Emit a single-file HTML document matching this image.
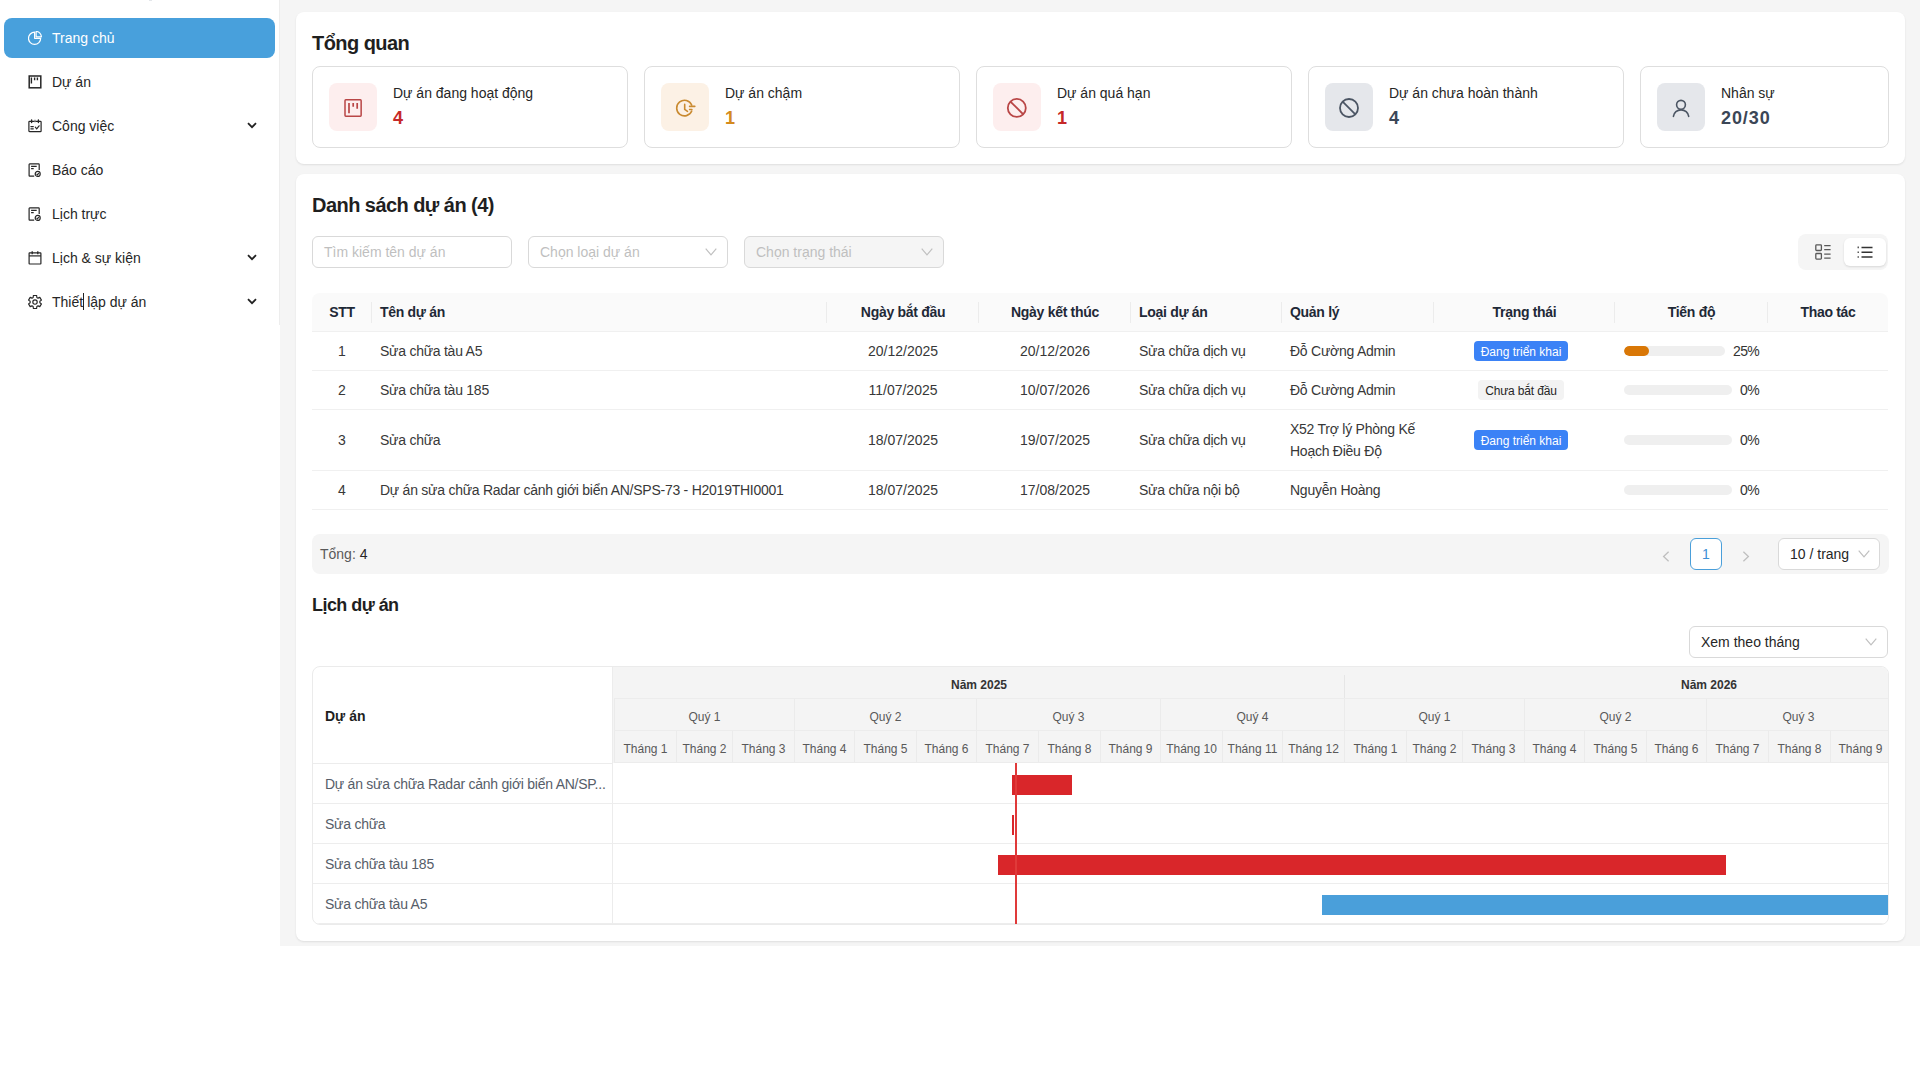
<!DOCTYPE html>
<html lang="vi">
<head>
<meta charset="utf-8">
<title>Trang chủ</title>
<style>
*{box-sizing:border-box;margin:0;padding:0}
html,body{width:1920px;height:1080px;overflow:hidden;background:#fff}
body{font-family:"Liberation Sans",sans-serif;font-size:14px;line-height:22px;color:#262626;position:relative}
.abs{position:absolute}
svg{display:block}
/* sidebar */
#side{left:0;top:0;width:280px;height:1080px;background:#fff}
#sbd{left:279px;top:0;width:1px;height:325px;background:#ededed}
.nav{position:absolute;left:4px;width:271px;height:40px;border-radius:8px;color:#262626}
.nav .ic{position:absolute;left:24px;top:13px;width:14px;height:14px}
.nav .tx{position:absolute;left:48px;top:9px;white-space:nowrap}
.nav.active{background:#48a0dc;color:#fff}
.nav .chev{position:absolute;left:243px;top:16px}
.caret{display:inline-block;width:1px;height:17px;background:#222;vertical-align:-3px;margin:0 3px 0 0}
/* main */
#main{left:280px;top:0;width:1640px;height:946px;background:#f5f5f5}
.card{position:absolute;background:#fff;border-radius:8px;box-shadow:0 1px 2px rgba(0,0,0,.06),0 1px 3px rgba(0,0,0,.04)}
.h1{font-size:20px;letter-spacing:-0.55px;font-weight:700;line-height:28px;color:#1f1f1f;white-space:nowrap}
.stat{position:absolute;top:54px;height:82px;border:1px solid #dedede;border-radius:8px;background:#fff}
.ibox{position:absolute;left:16px;top:16px;width:48px;height:48px;border-radius:8px;display:flex;align-items:center;justify-content:center}
.lbl{position:absolute;left:80px;top:15px;white-space:nowrap;color:#262626}
.val{position:absolute;left:80px;top:39px;font-size:18px;font-weight:700;line-height:24px;white-space:nowrap}
.h2{font-size:18px;letter-spacing:-0.55px;font-weight:700;line-height:24px;color:#1f1f1f;white-space:nowrap}
.inp{position:absolute;height:32px;border:1px solid #d9d9d9;border-radius:6px;background:#fff;padding:4px 11px;white-space:nowrap}
.inp.dis{background:#f5f5f5}
.ph{color:#bfbfbf}
.sel-ch{position:absolute;right:10px;top:11px}
.seg{position:absolute;width:90px;height:36px;background:#f5f5f5;border-radius:8px}
.segi{position:absolute;top:4px;width:42px;height:28px;border-radius:6px;display:flex;align-items:center;justify-content:center}
.segi:first-child{padding-left:4px}
.segi.on{background:#fff;box-shadow:0 1px 2px rgba(0,0,0,.08),0 1px 3px rgba(0,0,0,.05)}
.tbl{position:absolute;border-collapse:separate;border-spacing:0;table-layout:fixed;width:1576px}
.tbl th{background:#fafafa;font-weight:700;letter-spacing:-0.3px;color:#1f2937;text-align:left;padding:8px;height:39px;border-bottom:1px solid #f0f0f0;position:relative;white-space:nowrap}
.tbl th:first-child{border-top-left-radius:8px}
.tbl th:last-child{border-top-right-radius:8px}
.tbl th.c,.tbl td.c{text-align:center}
.tbl .sep{position:absolute;right:0;top:9px;width:1px;height:21px;background:#ececec}
.tbl td.t{letter-spacing:-0.25px}
.tbl td{padding:8px;border-bottom:1px solid #f0f0f0;color:#383838;vertical-align:middle;white-space:nowrap}
.tag{display:inline-block;font-size:12px;line-height:22px;height:20px;padding:0 7px;border-radius:4px;vertical-align:top;position:relative;top:1px;margin-right:7px}
.tag.on{background:#3b82f6;color:#fff}
.tag.off{background:#f3f3f3;color:#262626;letter-spacing:-0.15px}
.prog{display:flex;align-items:center;width:136px;margin-left:1px}
.trk{flex:none;height:10px;background:#efefef;border-radius:5px;overflow:hidden}
.fill{height:10px;background:#d97706;border-radius:5px}
.ptx{margin-left:8px;color:#333;white-space:nowrap;letter-spacing:-0.6px}
.pbar{position:absolute;height:40px;background:#f5f5f5;border-radius:8px}
.ptot{position:absolute;left:8px;top:9px;color:#595959}
.pg1{position:absolute;left:1378px;top:4px;width:32px;height:32px;border:1px solid #4a9fda;border-radius:6px;background:#fff;color:#3d8fd6;text-align:center;line-height:30px}
.gantt{position:absolute;border:1px solid #ebebeb;border-radius:8px;overflow:hidden;background:#fff}
.ghbg{position:absolute;left:300px;top:0;right:0;height:96px;background:#f4f4f4}
.gleft-h{position:absolute;left:0;top:0;width:300px;height:97px;border-right:1px solid #ececec;border-bottom:1px solid #ececec;padding:38px 12px;font-weight:700;color:#1f1f1f}
.gclip{position:absolute;left:0;top:0;width:1575px;height:257px;overflow:hidden;z-index:1}
.gc{position:absolute;height:32px;text-align:center;font-size:12px;line-height:32px;padding-top:2px;color:#595959;white-space:nowrap;border-bottom:1px solid #ececec}
.gc.yr{font-weight:700;color:#333}
.gc.qt,.gc.mo{border-left:1px solid #ebebeb}
.bar{position:absolute;height:20px}
.today{position:absolute;top:96px;width:2px;height:161px;background:#e03a3a}
.grow{position:absolute;left:0;width:1575px;height:40px;border-bottom:1px solid #ededed}
.glbl{position:absolute;left:12px;top:9px;color:#565d69;white-space:nowrap;letter-spacing:-0.25px}
.gvl{position:absolute;left:299px;top:0;width:1px;height:257px;background:#ececec}
</style>
</head>
<body>
<div id="side" class="abs">
  <div class="nav active" style="top:18px">
    <svg class="ic" viewBox="0 0 14 14" fill="none" stroke="#fff" stroke-width="1.2" stroke-linejoin="round"><path d="M6.6 1.2A6.1 6.1 0 1 0 12.7 7.3H6.6z"/><path d="M8.1 .5v5.3h5.3A5.3 5.3 0 0 0 8.1 .5z"/></svg>
    <span class="tx">Trang chủ</span>
  </div>
  <div class="nav" style="top:62px">
    <svg class="ic" viewBox="0 0 14 14" fill="none" stroke="#262626" stroke-width="1.5"><rect x="1.2" y="1" width="11.6" height="11.8"/><path d="M3.4 2.4v6.2M6.6 2.4v2.8M9.4 2.4v2.8" stroke-width="1.4"/></svg>
    <span class="tx">Dự án</span>
  </div>
  <div class="nav" style="top:106px">
    <svg class="ic" viewBox="0 0 14 14" fill="none" stroke="#262626" stroke-width="1.2" stroke-linecap="round"><rect x=".9" y="2.4" width="12.2" height="10.2" rx=".7"/><path d="M3.6 1v2.6M10.4 1v2.6" stroke-width="1.4"/><path d="M7 1.2v1.6" stroke="#888"/><path d="M2.9 7.6h2.4M2.9 9.8h2.4"/><path d="M7.3 8.2l1.4 1.6 2.4-3"/></svg>
    <span class="tx">Công việc</span>
    <svg class="chev" width="10" height="7" viewBox="0 0 10 7"><path d="M1 1.2l4 4 4-4" fill="none" stroke="#222" stroke-width="1.8"/></svg>
  </div>
  <div class="nav" style="top:150px">
    <svg class="ic" viewBox="0 0 14 14" fill="none" stroke="#262626" stroke-width="1.2"><path d="M6.2 13.1H1.7a.6.6 0 0 1-.6-.6V1.5a.6.6 0 0 1 .6-.6h8.9a.6.6 0 0 1 .6.6v5.6"/><path d="M3.1 3.4h5.6M3.1 5.6h2.6"/><circle cx="9.7" cy="10.9" r="2.5"/><path d="M8.6 10.9l.8.9 1.4-1.6" stroke-width="1.1"/></svg>
    <span class="tx">Báo cáo</span>
  </div>
  <div class="nav" style="top:194px">
    <svg class="ic" viewBox="0 0 14 14" fill="none" stroke="#262626" stroke-width="1.2"><path d="M6.2 13.1H1.7a.6.6 0 0 1-.6-.6V1.5a.6.6 0 0 1 .6-.6h8.9a.6.6 0 0 1 .6.6v5.6"/><path d="M3.1 3.4h5.6M3.1 5.6h2.6"/><circle cx="9.7" cy="10.9" r="2.5"/><path d="M8.6 10.9l.8.9 1.4-1.6" stroke-width="1.1"/></svg>
    <span class="tx">Lịch trực</span>
  </div>
  <div class="nav" style="top:238px">
    <svg class="ic" viewBox="0 0 14 14" fill="none" stroke="#262626" stroke-width="1.2"><rect x="1.1" y="1.9" width="11.8" height="11.1" rx=".5"/><path d="M1.1 4.9h11.8"/><path d="M4.2 .3v3M9.8 .3v3" stroke-width="1.3"/></svg>
    <span class="tx">Lịch &amp; sự kiện</span>
    <svg class="chev" width="10" height="7" viewBox="0 0 10 7"><path d="M1 1.2l4 4 4-4" fill="none" stroke="#222" stroke-width="1.8"/></svg>
  </div>
  <div class="nav" style="top:282px">
    <svg class="ic" viewBox="0 0 14 14" fill="none" stroke="#262626" stroke-width="1.15" stroke-linejoin="round"><path d="M5.16 2.46 L5.38 0.50 L8.62 0.50 L8.84 2.46 L10.02 3.14 L11.82 2.35 L13.44 5.15 L11.85 6.32 L11.85 7.68 L13.44 8.85 L11.82 11.65 L10.02 10.86 L8.84 11.54 L8.62 13.50 L5.38 13.50 L5.16 11.54 L3.98 10.86 L2.18 11.65 L0.56 8.85 L2.15 7.68 L2.15 6.32 L0.56 5.15 L2.18 2.35 L3.98 3.14 Z"/><circle cx="7" cy="7" r="2.2"/></svg>
    <span class="tx">Thiết<i class="caret"></i>lập dự án</span>
    <svg class="chev" width="10" height="7" viewBox="0 0 10 7"><path d="M1 1.2l4 4 4-4" fill="none" stroke="#222" stroke-width="1.8"/></svg>
  </div>
</div>

<div id="main" class="abs"></div>
<div id="sbd" class="abs"></div>
<div class="abs" style="left:149px;top:0;width:3px;height:1px;background:#e4e7eb"></div>

<!-- CARD 1 -->
<div class="card" style="left:296px;top:12px;width:1609px;height:152px">
  <div class="abs h1" style="left:16px;top:17px">Tổng quan</div>
  <div class="stat" style="left:16px;width:316px">
    <div class="ibox" style="background:#fdeeee"><svg width="48" height="48" viewBox="0 0 48 48" fill="none" stroke="#b94646" stroke-width="1.5"><rect x="16" y="16.85" width="16.15" height="16.3" rx=".8"/><path d="M20 20v10.2M24.2 20v3.8M28.2 20v5.7" stroke-width="1.7"/></svg></div>
    <div class="lbl">Dự án đang hoạt động</div>
    <div class="val" style="color:#c62828">4</div>
  </div>
  <div class="stat" style="left:348px;width:316px">
    <div class="ibox" style="background:#fcf1e5"><svg width="48" height="48" viewBox="0 0 48 48" fill="none" stroke="#c98a30" stroke-width="1.6" stroke-linecap="round"><path d="M30.68 22.05A7.8 7.8 0 1 0 30.73 28.02"/><path d="M23.7 21.4v4.9l2.8 2"/><path d="M28.6 23.4h5.2M28.6 26.5h2.3"/></svg></div>
    <div class="lbl">Dự án chậm</div>
    <div class="val" style="color:#d48a1e">1</div>
  </div>
  <div class="stat" style="left:680px;width:316px">
    <div class="ibox" style="background:#fdeeee"><svg width="48" height="48" viewBox="0 0 48 48" fill="none" stroke="#b94646" stroke-width="1.8"><circle cx="23.8" cy="24.9" r="9"/><path d="M17.44 18.54l12.72 12.72"/></svg></div>
    <div class="lbl">Dự án quá hạn</div>
    <div class="val" style="color:#c62828">1</div>
  </div>
  <div class="stat" style="left:1012px;width:316px">
    <div class="ibox" style="background:#e5e7eb"><svg width="48" height="48" viewBox="0 0 48 48" fill="none" stroke="#4b5563" stroke-width="1.8"><circle cx="24" cy="25" r="9"/><path d="M17.64 18.64l12.72 12.72"/></svg></div>
    <div class="lbl">Dự án chưa hoàn thành</div>
    <div class="val" style="color:#3b4656">4</div>
  </div>
  <div class="stat" style="left:1344px;width:249px">
    <div class="ibox" style="background:#e5e7eb"><svg width="48" height="48" viewBox="0 0 48 48" fill="none" stroke="#4b5563" stroke-width="1.6" stroke-linecap="round"><circle cx="24" cy="21.8" r="4.4"/><path d="M16.4 33.4A7.7 7.4 0 0 1 31.7 33.4"/></svg></div>
    <div class="lbl">Nhân sự</div>
    <div class="val" style="color:#3b4656;letter-spacing:0.9px">20/30</div>
  </div>
</div>

<!-- CARD 2 -->
<div class="card" style="left:296px;top:174px;width:1609px;height:767px">
  <div class="abs h1" style="left:16px;top:17px">Danh sách dự án (4)</div>
  <div class="inp" style="left:16px;top:62px;width:200px"><span class="ph">Tìm kiếm tên dự án</span></div>
  <div class="inp" style="left:232px;top:62px;width:200px"><span class="ph">Chọn loại dự án</span><svg class="sel-ch" width="12" height="8" viewBox="0 0 12 8"><path d="M.7 .7l5.3 6.2 5.3-6.2" fill="none" stroke="#bfbfbf" stroke-width="1.15"/></svg></div>
  <div class="inp dis" style="left:448px;top:62px;width:200px"><span class="ph">Chọn trạng thái</span><svg class="sel-ch" width="12" height="8" viewBox="0 0 12 8"><path d="M.7 .7l5.3 6.2 5.3-6.2" fill="none" stroke="#bfbfbf" stroke-width="1.15"/></svg></div>
  <div class="seg" style="left:1502px;top:60px">
    <div class="segi" style="left:2px"><svg width="16" height="16" viewBox="0 0 16 16" fill="none" stroke="#595959" stroke-width="1.3"><rect x=".8" y=".9" width="5.6" height="5.6" rx=".8"/><rect x=".8" y="9.5" width="5.6" height="5.6" rx=".8"/><path d="M9.2 1.6h6.4M9.2 5.6h6.4M9.2 10.2h6.4M9.2 14.2h6.4"/></svg></div>
    <div class="segi on" style="left:46px"><svg width="16" height="12" viewBox="0 0 16 12" fill="none" stroke="#333" stroke-width="1.5"><path d="M4.5 1.4h11M4.5 6.2h11M4.5 11h11"/><path d="M.6 1.4h1.2M.6 6.2h1.2M.6 11h1.2" stroke-width="1.6"/></svg></div>
  </div>
<table class="tbl" style="left:16px;top:119px"><colgroup><col style="width:60px"><col style="width:455px"><col style="width:152px"><col style="width:152px"><col style="width:151px"><col style="width:152px"><col style="width:181px"><col style="width:153px"><col style="width:120px"></colgroup><thead><tr><th class="c">STT<i class="sep"></i></th><th class="">Tên dự án<i class="sep"></i></th><th class="c">Ngày bắt đầu<i class="sep"></i></th><th class="c">Ngày kết thúc<i class="sep"></i></th><th class="">Loại dự án<i class="sep"></i></th><th class="">Quản lý<i class="sep"></i></th><th class="c">Trạng thái<i class="sep"></i></th><th class="c">Tiến độ<i class="sep"></i></th><th class="c">Thao tác</th></tr></thead><tbody><tr style="height:39px"><td class="c">1</td><td class="t">Sửa chữa tàu A5</td><td class="c">20/12/2025</td><td class="c">20/12/2026</td><td class="t">Sửa chữa dịch vụ</td><td class="t">Đỗ Cường Admin</td><td class="c"><span class="tag on">Đang triển khai</span></td><td><div class="prog"><div class="trk" style="width:101px"><div class="fill" style="width:25%"></div></div><span class="ptx">25%</span></div></td><td></td></tr><tr style="height:39px"><td class="c">2</td><td class="t">Sửa chữa tàu 185</td><td class="c">11/07/2025</td><td class="c">10/07/2026</td><td class="t">Sửa chữa dịch vụ</td><td class="t">Đỗ Cường Admin</td><td class="c"><span class="tag off">Chưa bắt đầu</span></td><td><div class="prog"><div class="trk" style="width:108px"><div class="fill" style="width:0%"></div></div><span class="ptx">0%</span></div></td><td></td></tr><tr style="height:61px"><td class="c">3</td><td class="t">Sửa chữa</td><td class="c">18/07/2025</td><td class="c">19/07/2025</td><td class="t">Sửa chữa dịch vụ</td><td class="t">X52 Trợ lý Phòng Kế<br>Hoạch Điều Độ</td><td class="c"><span class="tag on">Đang triển khai</span></td><td><div class="prog"><div class="trk" style="width:108px"><div class="fill" style="width:0%"></div></div><span class="ptx">0%</span></div></td><td></td></tr><tr style="height:39px"><td class="c">4</td><td class="t">Dự án sửa chữa Radar cảnh giới biển AN/SPS-73 - H2019THI0001</td><td class="c">18/07/2025</td><td class="c">17/08/2025</td><td class="t">Sửa chữa nội bộ</td><td class="t">Nguyễn Hoàng</td><td class="c"></td><td><div class="prog"><div class="trk" style="width:108px"><div class="fill" style="width:0%"></div></div><span class="ptx">0%</span></div></td><td></td></tr></tbody></table>
  <div class="pbar" style="left:16px;top:360px;width:1577px">
    <span class="ptot">Tổng: <span style="color:#262626">4</span></span>
    <svg class="abs" style="left:1350px;top:17px" width="8" height="11" viewBox="0 0 8 11"><path d="M6.6 .8L1.6 5.5l5 4.7" fill="none" stroke="#bfbfbf" stroke-width="1.3"/></svg>
    <div class="pg1">1</div>
    <svg class="abs" style="left:1430px;top:17px" width="8" height="11" viewBox="0 0 8 11"><path d="M1.4 .8l5 4.7-5 4.7" fill="none" stroke="#bfbfbf" stroke-width="1.3"/></svg>
    <div class="inp" style="left:1466px;top:4px;width:102px;background:#fff"><span style="color:#262626">10 / trang</span><svg class="sel-ch" style="right:9px" width="12" height="8" viewBox="0 0 12 8"><path d="M.7 .7l5.3 6.2 5.3-6.2" fill="none" stroke="#bfbfbf" stroke-width="1.15"/></svg></div>
  </div>
  <div class="abs h2" style="left:16px;top:419px">Lịch dự án</div>
  <div class="inp" style="left:1393px;top:452px;width:199px"><span style="color:#262626">Xem theo tháng</span><svg class="sel-ch" width="12" height="8" viewBox="0 0 12 8"><path d="M.7 .7l5.3 6.2 5.3-6.2" fill="none" stroke="#bfbfbf" stroke-width="1.15"/></svg></div>
<div class="gantt" style="left:16px;top:492px;width:1577px;height:259px"><div class="ghbg"></div><div class="gleft-h">Dự án</div><div class="gvl"></div><div class="gclip"><div class="gc yr" style="left:301px;top:0;width:730px">Năm 2025</div><div class="abs" style="left:1031px;top:8px;width:1px;height:24px;background:#e6e6e6"></div><div class="gc yr" style="left:1031px;top:0;width:730px">Năm 2026</div><div class="gc qt" style="left:301px;top:32px;width:180px">Quý 1</div><div class="gc qt" style="left:481px;top:32px;width:182px">Quý 2</div><div class="gc qt" style="left:663px;top:32px;width:184px">Quý 3</div><div class="gc qt" style="left:847px;top:32px;width:184px">Quý 4</div><div class="gc qt" style="left:1031px;top:32px;width:180px">Quý 1</div><div class="gc qt" style="left:1211px;top:32px;width:182px">Quý 2</div><div class="gc qt" style="left:1393px;top:32px;width:184px">Quý 3</div><div class="gc mo" style="left:301px;top:64px;width:62px">Tháng 1</div><div class="gc mo" style="left:363px;top:64px;width:56px">Tháng 2</div><div class="gc mo" style="left:419px;top:64px;width:62px">Tháng 3</div><div class="gc mo" style="left:481px;top:64px;width:60px">Tháng 4</div><div class="gc mo" style="left:541px;top:64px;width:62px">Tháng 5</div><div class="gc mo" style="left:603px;top:64px;width:60px">Tháng 6</div><div class="gc mo" style="left:663px;top:64px;width:62px">Tháng 7</div><div class="gc mo" style="left:725px;top:64px;width:62px">Tháng 8</div><div class="gc mo" style="left:787px;top:64px;width:60px">Tháng 9</div><div class="gc mo" style="left:847px;top:64px;width:62px">Tháng 10</div><div class="gc mo" style="left:909px;top:64px;width:60px">Tháng 11</div><div class="gc mo" style="left:969px;top:64px;width:62px">Tháng 12</div><div class="gc mo" style="left:1031px;top:64px;width:62px">Tháng 1</div><div class="gc mo" style="left:1093px;top:64px;width:56px">Tháng 2</div><div class="gc mo" style="left:1149px;top:64px;width:62px">Tháng 3</div><div class="gc mo" style="left:1211px;top:64px;width:60px">Tháng 4</div><div class="gc mo" style="left:1271px;top:64px;width:62px">Tháng 5</div><div class="gc mo" style="left:1333px;top:64px;width:60px">Tháng 6</div><div class="gc mo" style="left:1393px;top:64px;width:62px">Tháng 7</div><div class="gc mo" style="left:1455px;top:64px;width:62px">Tháng 8</div><div class="gc mo" style="left:1517px;top:64px;width:60px">Tháng 9</div><div class="bar" style="left:699px;top:108px;width:60px;background:#d9262a"></div><div class="bar" style="left:699px;top:148px;width:2px;background:#d9262a"></div><div class="bar" style="left:685px;top:188px;width:728px;background:#d9262a"></div><div class="bar" style="left:1009px;top:228px;width:730px;background:#4a9fda"></div><div class="today" style="left:702px"></div></div><div class="grow" style="top:97px"><span class="glbl">Dự án sửa chữa Radar cảnh giới biển AN/SP...</span></div><div class="grow" style="top:137px"><span class="glbl">Sửa chữa</span></div><div class="grow" style="top:177px"><span class="glbl">Sửa chữa tàu 185</span></div><div class="grow" style="top:217px"><span class="glbl">Sửa chữa tàu A5</span></div></div></div>
</body>
</html>
